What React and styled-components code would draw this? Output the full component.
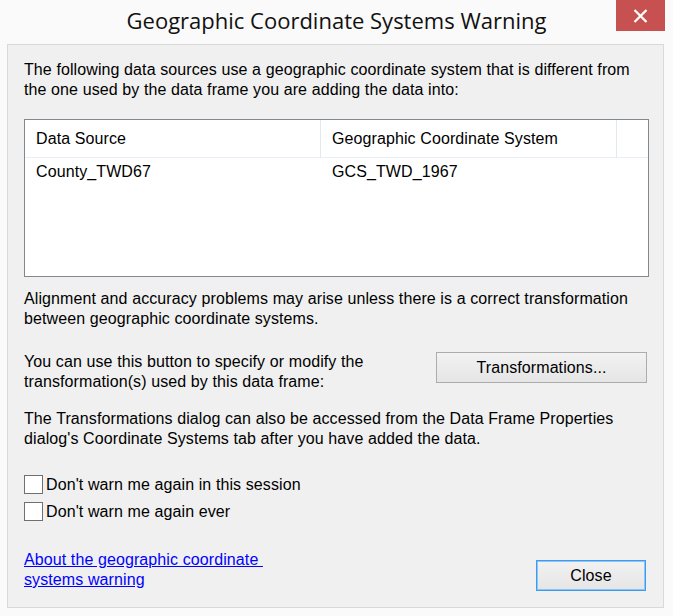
import React from 'react'
import styled, { createGlobalStyle } from 'styled-components'

const GlobalStyle = createGlobalStyle`
    html, body {
        margin: 0;
        padding: 0;
        background: #fafafa;
    }
`
const Window = styled.div`
    width: 673px;
    height: 616px;
    background: #fafafa;
    display: flex;
    flex-direction: column;
    font-family: "Liberation Sans", Arial, sans-serif;
    font-size: 16px;
    letter-spacing: 0.1px;
    color: #000;
`
const TitleBar = styled.div`
    height: 44px;
    display: grid;
    grid-template-columns: 1fr;
`
const Title = styled.div`
    grid-area: 1 / 1;
    justify-self: center;
    align-self: start;
    margin-top: 5px;
    font-family: "Open Sans", "Noto Sans", sans-serif;
    font-size: 22px;
    letter-spacing: 0;
    color: #111;
`
const CloseBox = styled.div`
    grid-area: 1 / 1;
    justify-self: end;
    align-self: start;
    width: 49px;
    height: 31px;
    margin-right: 8px;
    background: #c75050;
    display: flex;
    align-items: center;
    justify-content: center;
`
const Client = styled.div`
    flex: 1;
    margin: 0 9px 8px 7px;
    border: 1px solid #d9d9d9;
    background: #f0f0f0;
    padding: 15px 14px 0 16px;
    display: flex;
    flex-direction: column;
`
const Para = styled.p`
    margin: ${(p) => p.$top || 0}px 0 0 0;
    line-height: 20px;
`
const Table = styled.div`
    margin-top: 19px;
    height: 156px;
    border: 1px solid #828790;
    background: #fff;
`
const Row = styled.div`
    display: grid;
    grid-template-columns: 296px 296px 1fr;
    height: ${(p) => p.$h}px;
    align-items: center;
    border-bottom: ${(p) => (p.$head ? '1px solid #e7eef7' : 'none')};
`
const Cell = styled.div`
    padding-left: 11px;
    height: 100%;
    display: flex;
    align-items: center;
    border-right: ${(p) => (p.$head ? '1px solid #e3e8f0' : 'none')};
`
const ButtonRow = styled.div`
    margin-top: 23px;
    display: flex;
    justify-content: space-between;
    align-items: flex-start;
`
const Button = styled.button`
    font-family: "Liberation Sans", Arial, sans-serif;
    font-size: 16px;
    letter-spacing: 0.1px;
    color: #000;
    width: ${(p) => p.$w}px;
    height: 31px;
    background: linear-gradient(#f2f2f2, #e5e5e5);
    border: 1px solid ${(p) => (p.$focus ? '#3c9cf0' : '#acacac')};
    box-shadow: ${(p) => (p.$focus ? 'inset 0 0 0 1px #8cc4f5' : 'none')};
    padding: 0;
    margin-top: ${(p) => p.$mt || 0}px;
    margin-right: ${(p) => p.$mr || 0}px;
`
const Checks = styled.div`
    margin-top: 25px;
    display: flex;
    flex-direction: column;
    gap: 6px;
`
const CheckRow = styled.label`
    display: flex;
    align-items: center;
    gap: 3px;
    height: 21px;
`
const Box = styled.span`
    width: 17px;
    height: 17px;
    border: 1px solid #707070;
    background: #fff;
`
const Footer = styled.div`
    margin-top: 28px;
    display: flex;
    justify-content: space-between;
    align-items: flex-start;
`
const Link = styled.a`
    color: #0000ff;
    text-decoration: underline;
    line-height: 20px;
    white-space: pre;
`

const App = () => (
    <Window>
        <GlobalStyle />
        <TitleBar>
            <Title>Geographic Coordinate Systems Warning</Title>
            <CloseBox>
                <svg width="15" height="14" viewBox="0 0 15 14">
                    <path d="M1.5 1 L13.5 13 M13.5 1 L1.5 13" stroke="#fff" strokeWidth="2.3" />
                </svg>
            </CloseBox>
        </TitleBar>
        <Client>
            <Para>
                The following data sources use a geographic coordinate system that is different from
                <br />
                the one used by the data frame you are adding the data into:
            </Para>
            <Table>
                <Row $h={37} $head>
                    <Cell $head>Data Source</Cell>
                    <Cell $head>Geographic Coordinate System</Cell>
                    <Cell />
                </Row>
                <Row $h={28}>
                    <Cell>County_TWD67</Cell>
                    <Cell>GCS_TWD_1967</Cell>
                    <Cell />
                </Row>
            </Table>
            <Para $top={12}>
                Alignment and accuracy problems may arise unless there is a correct transformation
                <br />
                between geographic coordinate systems.
            </Para>
            <ButtonRow>
                <Para>
                    You can use this button to specify or modify the
                    <br />
                    transformation(s) used by this data frame:
                </Para>
                <Button $w={211} $mr={2}>Transformations...</Button>
            </ButtonRow>
            <Para $top={17}>
                The Transformations dialog can also be accessed from the Data Frame Properties
                <br />
                dialog's Coordinate Systems tab after you have added the data.
            </Para>
            <Checks>
                <CheckRow>
                    <Box />
                    Don't warn me again in this session
                </CheckRow>
                <CheckRow>
                    <Box />
                    Don't warn me again ever
                </CheckRow>
            </Checks>
            <Footer>
                <Link href="#">{'About the geographic coordinate \nsystems warning'}</Link>
                <Button $w={110} $mr={3} $mt={10} $focus>Close</Button>
            </Footer>
        </Client>
    </Window>
)
export default App
